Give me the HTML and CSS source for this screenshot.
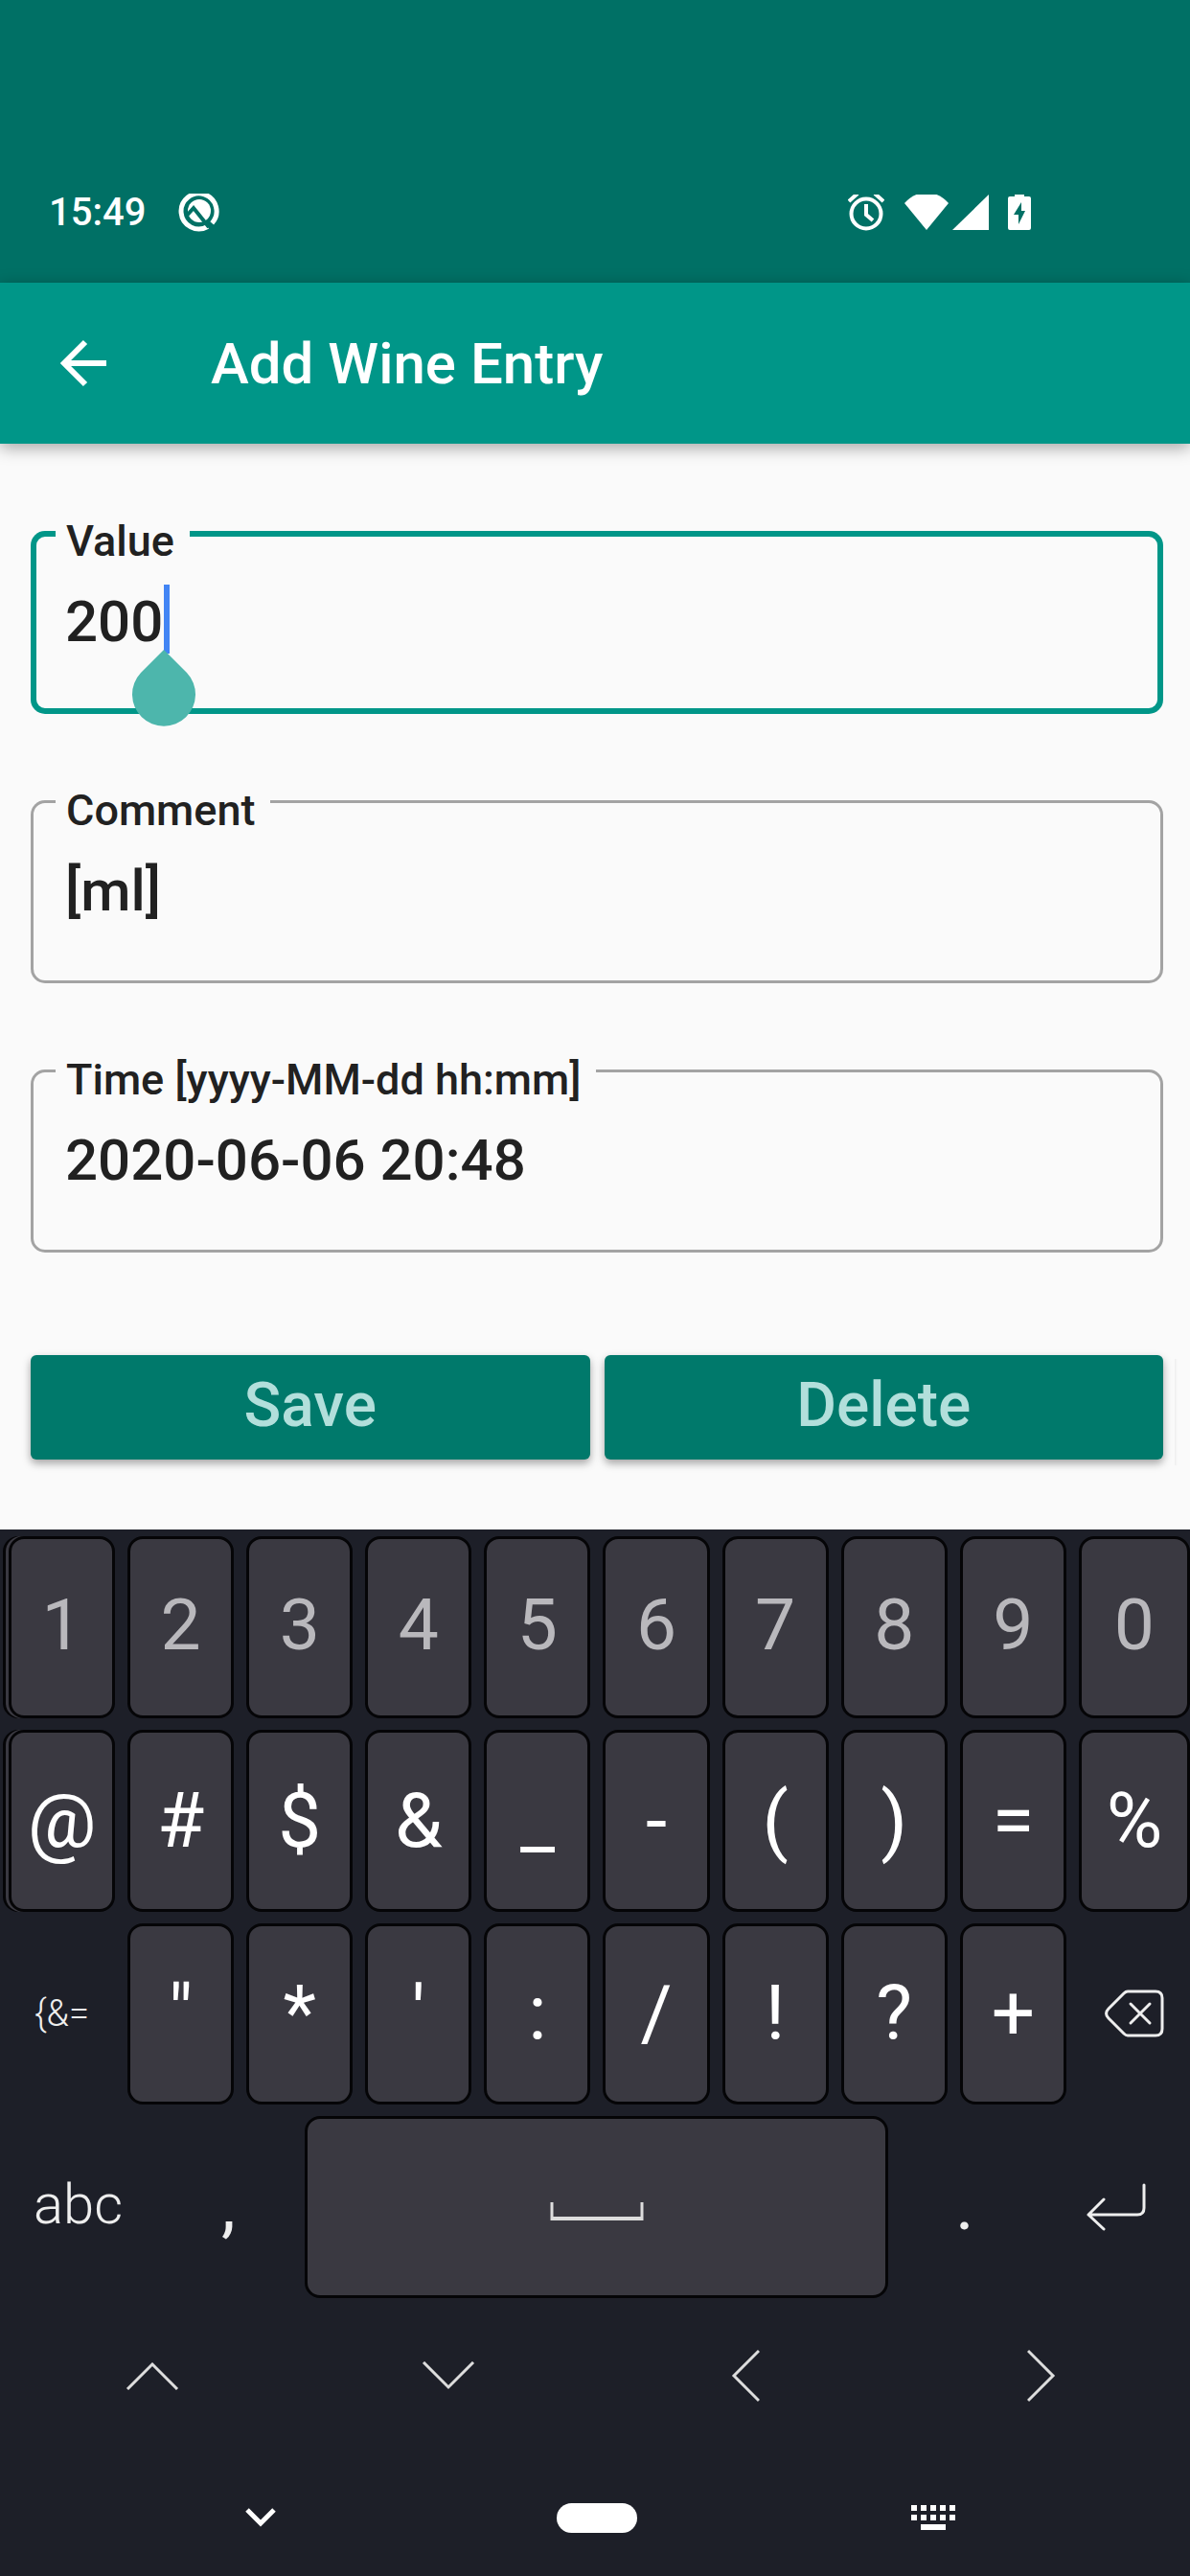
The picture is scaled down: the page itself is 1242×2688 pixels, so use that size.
FILE: index.html
```html
<!DOCTYPE html>
<html lang="en">
<head>
<meta charset="utf-8">
<meta name="viewport" content="width=device-width, initial-scale=1">
<title>Add Wine Entry</title>
<link rel="stylesheet" href="styles.css">
</head>
<body>
<div class="status">
  <div class="status__left">
    <time class="clock">15:49</time>
    <svg width="43" height="40" viewBox="0 0 43 40" fill="none">
      <path d="M30.700 34.500A18.500 18.500 0 1 1 35.200 30.900" stroke="#fff" stroke-width="5"/>
      <circle cx="22" cy="18" r="12" fill="#fff"/>
      <path d="M8 24l8-9 16 20" stroke="#007065" stroke-width="4"/>
    </svg>
  </div>
  <div class="status__right">
    <svg class="alarm" width="38" height="38" viewBox="0 0 38 38" fill="none" stroke="#fff" stroke-width="4">
      <circle cx="19" cy="20" r="15.500"/>
      <path d="M19 10v11l7 6M1 7l9-8M37 7l-9-8"/>
    </svg>
    <svg width="46" height="38" viewBox="0 0 46 38" fill="#fff"><path d="M0 9Q10-2 23-2T46 9L23 37z"/></svg>
    <svg class="signal" width="38" height="38" viewBox="0 0 38 38" fill="#fff"><path d="M38 0v37H0z"/></svg>
    <svg width="24" height="38" viewBox="0 0 24 38"><path fill="#fff" fill-rule="evenodd" d="M7 0h10v2h5q2 0 2 2v31q0 2-2 2H2q-2 0-2-2V4q0-2 2-2h5zM14 8L6 21h5v10l7-14h-4z"/></svg>
  </div>
</div>
<header class="appbar">
  <button class="back" type="button" aria-label="Back">
    <svg width="50" height="50" viewBox="0 0 50 50" fill="none" stroke="#fff" stroke-width="6"><path d="M49 25H5M27 3L5 25l22 22"/></svg>
  </button>
  <h1 class="title">Add Wine Entry</h1>
</header>
<main>
  <form class="form">
    <div class="field field--active">
      <label class="field__label" for="value">Value</label>
      <input class="field__input" id="value" type="text" inputmode="numeric" value="200">
      <span class="caret"></span>
      <svg class="handle" width="66" height="80" viewBox="0 0 66 80" fill="#4db6ac"><path d="M33 0L57 24A33 33 0 1 1 9 24z"/></svg>
    </div>
    <div class="field">
      <label class="field__label" for="comment">Comment</label>
      <input class="field__input" id="comment" type="text" value="[ml]">
    </div>
    <div class="field">
      <label class="field__label" for="time">Time [yyyy-MM-dd hh:mm]</label>
      <input class="field__input" id="time" type="text" value="2020-06-06 20:48">
    </div>
    <div class="actions">
      <button class="action" type="button">Save</button>
      <button class="action" type="button">Delete</button>
    </div>
  </form>
</main>
<section class="keyboard" aria-label="Keyboard">
  <div class="keys">
    <div class="row row--digits">
      <button class="key key--edge" type="button">1</button><button class="key" type="button">2</button><button class="key" type="button">3</button><button class="key" type="button">4</button><button class="key" type="button">5</button><button class="key" type="button">6</button><button class="key" type="button">7</button><button class="key" type="button">8</button><button class="key" type="button">9</button><button class="key" type="button">0</button>
    </div>
    <div class="row">
      <button class="key key--edge" type="button">@</button><button class="key" type="button">#</button><button class="key" type="button">$</button><button class="key" type="button">&amp;</button><button class="key" type="button">_</button><button class="key" type="button">-</button><button class="key" type="button">(</button><button class="key" type="button">)</button><button class="key" type="button">=</button><button class="key" type="button">%</button>
    </div>
    <div class="row">
      <button class="key key--flat key--small" type="button">{&amp;=</button><button class="key" type="button">"</button><button class="key" type="button">*</button><button class="key" type="button">'</button><button class="key" type="button">:</button><button class="key" type="button">/</button><button class="key" type="button">!</button><button class="key" type="button">?</button><button class="key" type="button">+</button>
      <button class="key key--flat" type="button" aria-label="Backspace">
        <svg width="62" height="50" viewBox="0 0 62 50" fill="none" stroke="#eee" stroke-width="3" stroke-linecap="round"><path d="M24 2h29q7 0 7 7v32q0 7-7 7H24q-2 0-4-2L4 30q-5-5 0-10L20 4q2-2 4-2zM27 15l20 20M47 15L27 35"/></svg>
      </button>
    </div>
    <div class="row row--space">
      <button class="key key--flat key--abc" type="button">abc</button>
      <button class="key key--flat key--mark" type="button">,</button>
      <button class="key" type="button" aria-label="Space">
        <svg class="space" width="98" height="20" viewBox="0 0 98 20" fill="none" stroke="#ddd"><path stroke-width="3" d="M2 0v19M96 0v19"/><path stroke-width="4" d="M1 17h96"/></svg>
      </button>
      <button class="key key--flat key--mark" type="button">.</button>
      <button class="key key--flat" type="button" aria-label="Enter">
        <svg width="62" height="50" viewBox="0 0 62 50" fill="none" stroke="#eee" stroke-width="3" stroke-linecap="round" stroke-linejoin="round"><path d="M60 2v24q0 7-7 7H2M18 17L2 33l16 15"/></svg>
      </button>
    </div>
  </div>
  <div class="arrows">
    <button class="icon" type="button" aria-label="Up"><svg width="56" height="30" viewBox="0 0 56 30"><path d="M2 29L28 3l26 26"/></svg></button>
    <button class="icon" type="button" aria-label="Down"><svg width="56" height="30" viewBox="0 0 56 30"><path d="M2 1l26 26L54 1"/></svg></button>
    <button class="icon" type="button" aria-label="Left"><svg width="30" height="56" viewBox="0 0 30 56"><path d="M29 2L3 28l26 26"/></svg></button>
    <button class="icon" type="button" aria-label="Right"><svg width="30" height="56" viewBox="0 0 30 56"><path d="M1 2l26 26L1 54"/></svg></button>
  </div>
</section>
<nav class="nav">
  <button class="icon" type="button" aria-label="Hide keyboard"><svg width="32" height="20" viewBox="0 0 32 20" fill="none" stroke="#fff" stroke-width="5"><path d="M2 2l14 14L30 2"/></svg></button>
  <button class="icon" type="button" aria-label="Home"><span class="pill"></span></button>
  <button class="icon" type="button" aria-label="Switch keyboard"><svg width="46" height="28" viewBox="0 0 46 28" fill="#fff"><path d="M0 1h6v6H0zM10 1h6v6h-6zM20 1h6v6h-6zM30 1h6v6h-6zM40 1h6v6h-6zM0 11h6v6H0zM10 11h6v6h-6zM20 11h6v6h-6zM30 11h6v6h-6zM40 11h6v6h-6zM10 21h26v6H10z"/></svg></button>
</nav>
</body>
</html>
```
FILE: styles.css
```css
* { box-sizing: border-box; }

body {
  margin: 0;
  min-height: 100vh;
  display: flex;
  flex-direction: column;
  background: #1d1f28;
  color: #212121;
  font-family: Roboto, sans-serif;
  font-weight: 500;
}

button, input {
  font: inherit;
  color: inherit;
  margin: 0;
  padding: 0;
  border: 0;
  background: none;
  outline: 0;
}

svg { display: block; }

.status {
  display: flex;
  justify-content: space-between;
  padding: 198px 166px 49px 51px;
  background: #007065;
  color: #fff;
}
.status__left, .status__right {
  display: flex;
  align-items: center;
  height: 48px;
}
.status__left { gap: 34px; }
.clock { font-size: 40px; line-height: 48px; }
.alarm { margin-right: 21px; }
.signal { margin: 0 20px 0 4px; }

.appbar {
  position: relative;
  z-index: 1;
  display: flex;
  align-items: center;
  gap: 108px;
  height: 168px;
  padding: 0 62px;
  background: #009688;
  color: #fff;
  box-shadow: 0 4px 16px rgba(0, 0, 0, .35);
}
.title { margin: 0; padding-top: 2px; font-size: 60px; line-height: 72px; font-weight: 500; }

main { background: #fafafa; padding: 91px 28px 73px 32px; }
.form { display: flex; flex-direction: column; gap: 90px; }

.field {
  position: relative;
  display: flex;
  flex-direction: column;
  height: 191px;
  border-radius: 15px;
  box-shadow: inset 0 0 0 3px #a3a3a3;
}
.field--active { box-shadow: inset 0 0 0 6px #009688; }
.field__label {
  align-self: flex-start;
  margin: -13px 0 24px 26px;
  padding: 0 16px 0 11px;
  background: #fafafa;
  font-size: 45px;
  line-height: 48px;
}
.field__input {
  height: 72px;
  margin: 0 36px;
  font-size: 60px;
  line-height: 72px;
  caret-color: transparent;
}
.caret {
  position: absolute;
  left: 139px;
  top: 56px;
  width: 6px;
  height: 72px;
  background: #4285f4;
}
.handle { position: absolute; left: 106px; top: 124px; }

.actions {
  position: relative;
  display: grid;
  grid-template-columns: 1fr 1fr;
  gap: 15px;
  margin-top: 17px;
}
.actions::after {
  content: "";
  position: absolute;
  left: calc(100% + 12px);
  top: 4px;
  bottom: -6px;
  width: 3px;
  background: linear-gradient(90deg, #eee, #fafafa);
}
.action {
  height: 109px;
  padding-bottom: 4px;
  border-radius: 6px;
  background: #00796b;
  color: #b2dfdb;
  font-size: 64px;
  box-shadow: 0 4px 8px rgba(0, 0, 0, .35);
}

.keyboard { padding-top: 7px; overflow: hidden; color: #fff; font-weight: 400; }
.keys { display: grid; grid-auto-rows: 1fr; gap: 12px; height: 795px; }
.row {
  display: grid;
  grid-template-columns: repeat(9, 111fr) 116fr;
  gap: 13px;
  padding-left: 9px;
}
.row--space {
  grid-template-columns: 155fr 155fr 609fr 156fr 155fr;
  gap: 2px;
  padding-left: 4px;
}
.key {
  display: flex;
  align-items: center;
  justify-content: center;
  min-width: 0;
  border: 3px solid #050507;
  border-radius: 16px;
  background: #3a3941;
  font-size: 80px;
  line-height: 96px;
}
.row--digits .key { padding-bottom: 6px; font-size: 75px; color: #b9b8bc; }
.key--edge { box-shadow: -3px 0 #3a3941, -6px 0 #050507; }
.key--flat { border-color: transparent; background: none; font-weight: 300; color: #eee; }
.key--small { font-size: 38px; }
.key--abc { padding-bottom: 6px; font-size: 58px; }
.key--mark { padding-bottom: 6px; font-size: 75px; font-weight: 400; }
.space { margin-top: 10px; }

.arrows {
  display: grid;
  grid-template-columns: repeat(4, 1fr);
  height: 162px;
  padding-left: 4px;
}
.arrows svg { fill: none; stroke: #ddd; stroke-width: 3; }
.icon { display: flex; align-items: center; justify-content: center; }

.nav {
  flex: 1;
  display: grid;
  grid-template-columns: repeat(3, 1fr);
  min-height: 128px;
  padding: 6px 93px 0 96px;
}
.pill { width: 84px; height: 31px; border-radius: 16px; background: #fff; }
```
